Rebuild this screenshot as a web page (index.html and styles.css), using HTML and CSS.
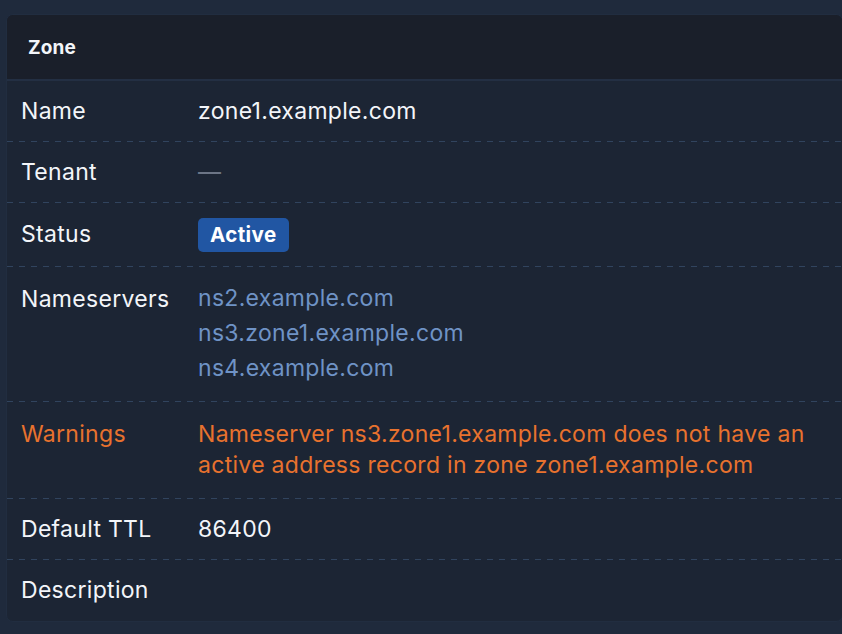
FILE: index.html
```html
<!DOCTYPE html>
<html>
<head>
<meta charset="utf-8">
<link rel="stylesheet" href="styles.css">
</head>
<body>
<div class="page">
  <div class="card">
    <div class="card-header">Zone</div>
    <div class="rows">
      <div class="row">
        <div class="label">Name</div>
        <div class="value">zone1.example.com</div>
      </div>
      <div class="row">
        <div class="label">Tenant</div>
        <div class="value muted">—</div>
      </div>
      <div class="row status-row">
        <div class="label">Status</div>
        <div class="value"><span class="badge">Active</span></div>
      </div>
      <div class="row ns-row">
        <div class="label">Nameservers</div>
        <div class="value links">
          <a class="link">ns2.example.com</a>
          <a class="link">ns3.zone1.example.com</a>
          <a class="link">ns4.example.com</a>
        </div>
      </div>
      <div class="row warn-row">
        <div class="label warn">Warnings</div>
        <div class="value warn">Nameserver ns3.zone1.example.com does not have an active address record in zone zone1.example.com</div>
      </div>
      <div class="row">
        <div class="label">Default TTL</div>
        <div class="value">86400</div>
      </div>
      <div class="row last">
        <div class="label">Description</div>
        <div class="value"></div>
      </div>
    </div>
  </div>
</div>
</body>
</html>
```

FILE: styles.css
```css
html, body {
  margin: 0;
  padding: 0;
  background: #1f2a3c;
  font-family: Inter, "Noto Sans", sans-serif;
  color: #f3f5f9;
}
.page {
  padding: 14px 0 0 6px;
  height: 620px;
}
.card {
  width: 837px;
  background: #1c2534;
  border: 1px solid #212d40;
  border-radius: 7px;
  overflow: hidden;
  box-sizing: border-box;
}
.card-header {
  height: 66px;
  box-sizing: border-box;
  background: #1a1f2a;
  border-bottom: 2px solid #232f43;
  padding: 0 21px;
  display: flex;
  align-items: center;
  font-weight: 700;
  font-size: 19px;
  letter-spacing: 0.15px;
}
.row {
  display: grid;
  grid-template-columns: 177px 1fr;
  font-size: 23px;
  letter-spacing: 0.3px;
  line-height: 30px;
  padding-bottom: 1px;
  background-image: repeating-linear-gradient(to right, #31445e 0 6px, transparent 6px 12px);
  background-size: 100% 1px;
  background-repeat: no-repeat;
  background-position: left bottom;
}
.row.last {
  background-image: none;
}
.label, .value {
  padding: 15px 14px;
}
.value {
  padding-left: 14px;
  padding-right: 14px;
}
.muted {
  color: #6c7586;
}
.status-row .label { padding-top: 16px; padding-bottom: 16px; }
.status-row .value { padding-top: 15px; padding-bottom: 14px; display: flex; align-items: flex-start; }
.badge {
  display: inline-block;
  background: #2156a3;
  color: #ffffff;
  font-weight: 700;
  font-size: 20.5px;
  line-height: 34px;
  height: 34px;
  padding: 0 12px;
  border-radius: 5px;
  letter-spacing: 0.4px;
}
.ns-row .label { padding-top: 17px; }
.links {
  display: flex;
  flex-direction: column;
  padding-top: 14px;
  padding-bottom: 15px;
}
.link {
  color: #6f93c6;
  line-height: 35px;
  text-decoration: none;
}
.warn { color: #e8722e; }
.warn-row .value, .warn-row .label {
  line-height: 31px;
  padding-top: 17px;
  padding-bottom: 17px;
}
.row.last .label, .row.last .value { padding-top: 15px; padding-bottom: 15px; }
```
